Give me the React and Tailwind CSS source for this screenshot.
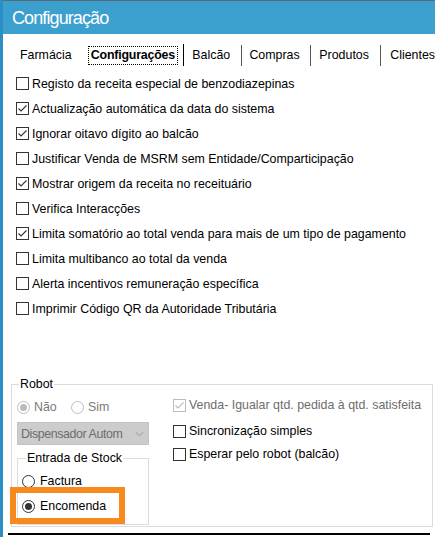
import React from "react";

const options = [
  { label: "Registo da receita especial de benzodiazepinas", checked: false },
  { label: "Actualização automática da data do sistema", checked: true },
  { label: "Ignorar oitavo dígito ao balcão", checked: true },
  { label: "Justificar Venda de MSRM sem Entidade/Comparticipação", checked: false },
  { label: "Mostrar origem da receita no receituário", checked: true },
  { label: "Verifica Interacções", checked: false },
  { label: "Limita somatório ao total venda para mais de um tipo de pagamento", checked: true },
  { label: "Limita multibanco ao total da venda", checked: false },
  { label: "Alerta incentivos remuneração específica", checked: false },
  { label: "Imprimir Código QR da Autoridade Tributária", checked: false },
];

function CheckBox({ checked, disabled }) {
  const c = disabled ? "#bcbcbc" : "#333333";
  return (
    <svg width="13" height="13" viewBox="0 0 13 13" className="shrink-0">
      <rect x="0.5" y="0.5" width="12" height="12" fill="#fff" stroke={c} />
      {checked && (
        <path d="M2.5 6.5 L5 9 L10.5 3.5" fill="none" stroke={c} strokeWidth="1.1" />
      )}
    </svg>
  );
}

function Radio({ checked, disabled }) {
  const c = disabled ? "#bcbcbc" : "#333333";
  return (
    <svg width="13" height="13" viewBox="0 0 13 13" className="shrink-0">
      <circle cx="6.5" cy="6.5" r="6" fill="#fff" stroke={c} />
      {checked && <circle cx="6.5" cy="6.5" r="3.5" fill={c} />}
    </svg>
  );
}

function Check({ label, checked, disabled, className = "" }) {
  return (
    <div className={`flex items-center h-[18px] ${className}`}>
      <CheckBox checked={checked} disabled={disabled} />
      <span className={`ml-[3px] ${disabled ? "text-[#6d6d6d]" : "text-black"}`}>
        {label}
      </span>
    </div>
  );
}

export default function App() {
  return (
    <div
      className="relative w-[435px] h-[537px] overflow-hidden bg-white border-l-[3px] border-[#2b8fc6] text-[12.4px] leading-[14px] text-black"
      style={{ fontFamily: '"Liberation Sans", Arial, sans-serif' }}
    >
      {/* title bar */}
      <div className="border-t border-[#5a6a74] h-[34px] bg-[#3ca0cf] flex items-center pl-[9px]">
        <span className="text-white text-[18px] tracking-[-0.9px] mt-[1px]">Configuração</span>
      </div>

      {/* tabs */}
      <div className="flex items-center h-[22px] mt-[10px] pl-[17px]">
        <span className="w-[69px]">Farmácia</span>
        <span className="w-[92px] h-[19px] border border-dotted border-black pl-[2px] flex items-center font-bold tracking-[-0.2px]">
          Configurações
        </span>
        <span className="ml-[5px] w-px h-[22px] bg-black" />
        <span className="ml-[8px] w-[50px]">Balcão</span>
        <span className="w-px h-[21px] bg-[#555]" />
        <span className="ml-[7px] w-[62px]">Compras</span>
        <span className="w-px h-[21px] bg-[#555]" />
        <span className="ml-[8px] w-[62px]">Produtos</span>
        <span className="w-px h-[21px] bg-[#555]" />
        <span className="ml-[9px]">Clientes</span>
      </div>

      {/* options */}
      <div className="mt-[5px] pl-[13px]">
        {options.map((o) => (
          <div key={o.label} className="h-[25px] flex items-center">
            <Check label={o.label} checked={o.checked} />
          </div>
        ))}
      </div>

      {/* robot group */}
      <fieldset className="ml-[8px] mr-[2px] mt-[56px] h-[150px] border border-[#dcdcdc]">
        <legend className="ml-[7px] px-[1px] leading-[14px]">Robot</legend>
        <div className="flex">
          <div className="pl-[5px] w-[161px]">
            <div className="flex items-center h-[18px] mt-[7px] text-[#7a7a7a]">
              <Radio checked disabled />
              <span className="ml-[4px] w-[37px]">Não</span>
              <Radio disabled />
              <span className="ml-[4px]">Sim</span>
            </div>
            <div className="mt-[6px] w-[132px] h-[23px] bg-[#cccccc] border border-[#c4c4c4] flex items-center justify-between pl-[3px] pr-[4px] text-[#6d6d6d]">
              <span className="tracking-[-0.4px]">Dispensador Autom</span>
              <svg width="9" height="6" viewBox="0 0 9 6">
                <path d="M0.5 0.8 L4.5 4.8 L8.5 0.8" fill="none" stroke="#9a9a9a" />
              </svg>
            </div>
            <fieldset className="mt-[6px] w-[132px] h-[74px] border border-[#dcdcdc]">
              <legend className="ml-[8px] px-[1px] leading-[14px]">Entrada de Stock</legend>
              <div className="pl-[4px]">
                <div className="flex items-center h-[18px] mt-[7px]">
                  <Radio />
                  <span className="ml-[5px]">Factura</span>
                </div>
                <div className="flex items-center h-[18px] mt-[7px]">
                  <Radio checked />
                  <span className="ml-[5px]">Encomenda</span>
                </div>
              </div>
            </fieldset>
          </div>
          <div className="pt-[5px]">
            <Check label="Venda- Igualar qtd. pedida à qtd. satisfeita" checked disabled />
            <Check label="Sincronização simples" className="mt-[8px]" />
            <Check label="Esperar pelo robot (balcão)" className="mt-[5px]" />
          </div>
        </div>
      </fieldset>

      <div className="ml-[5px] mr-[5px] mt-[6px] h-[2px] bg-black" />

      {/* highlight annotation */}
      <div className="absolute left-[7px] top-[487px] w-[115px] h-[37px] border-[6px] border-[#f7891f]" />
    </div>
  );
}
